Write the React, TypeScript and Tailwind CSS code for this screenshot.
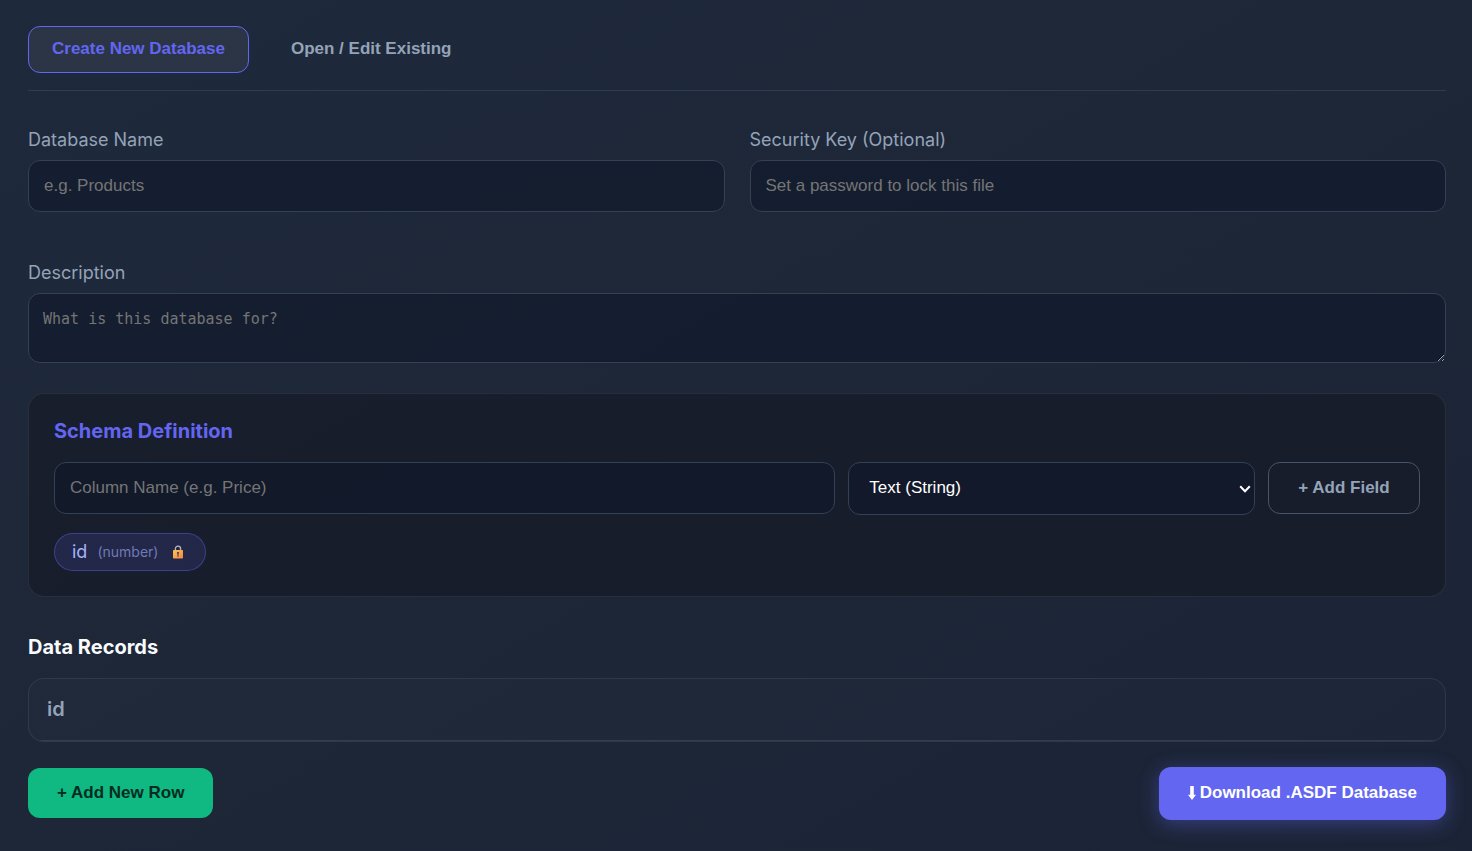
import { useState } from "react";

const fieldClass =
  "h-[52px] w-full min-w-0 rounded-xl border border-[#334155] bg-[#0f172a]/60 px-[15px] text-[17px] text-white outline-none placeholder:text-[#757575] font-['Liberation_Sans',Arial,sans-serif]";
const labelClass = "mb-2 block leading-6 text-[#94a3b8]";
const buttonFont = "font-['Liberation_Sans',Arial,sans-serif] text-[17px] leading-5 font-bold";

function LockIcon() {
  return (
    <svg className="h-[14px] w-3" viewBox="0 0 12 14" aria-hidden="true">
      <defs>
        <linearGradient id="lock-body" x1="0" y1="0" x2="1" y2="1">
          <stop offset="0" stopColor="#fcc552" />
          <stop offset="1" stopColor="#f68344" />
        </linearGradient>
      </defs>
      <path d="M3.4 6V3.700A2.600 2.600 0 0 1 8.600 3.700V6" fill="none" stroke="#b9b2c4" strokeWidth="1.300" />
      <rect x="1" y="5" width="10" height="8.500" rx="0.8" fill="url(#lock-body)" />
      <path d="M5 7h2v1.600l-.4.500v2.700H5.400V9.100L5 8.600z" fill="#5a4657" />
    </svg>
  );
}

function DownArrow() {
  return (
    <svg className="h-[14px] w-2 shrink-0" viewBox="0 0 8 14" aria-hidden="true">
      <path d="M2.200 0h3.600v8.800H8L4 14 0 8.800h2.200z" fill="currentColor" />
    </svg>
  );
}

function Chevron() {
  return (
    <svg
      className="pointer-events-none absolute top-1/2 right-1 h-2 w-3 -translate-y-1/2"
      viewBox="0 0 12 8"
      aria-hidden="true"
    >
      <path d="M1.200 1.300L6 6.200L10.800 1.300" fill="none" stroke="#fff" strokeWidth="2" />
    </svg>
  );
}

export default function App() {
  const [tab, setTab] = useState("create");
  const tabClass = (name: string) =>
    `h-[47px] rounded-xl border px-[23px] pb-[2px] ${buttonFont} ${
      tab === name
        ? "border-[#6366f1] bg-white/6 text-[#6366f1]"
        : "border-transparent text-[#94a3b8]"
    }`;

  return (
    <main className="min-h-screen bg-linear-to-br from-[#1e293b] via-[#1d2738] to-[#1b2436] pt-[26px] pr-[26px] pb-[31px] pl-7 font-['Inter',sans-serif] text-lg text-[#f8fafc]">
      <nav className="flex gap-[18px] border-b border-[#334155]/80 pb-[17px]">
        <button type="button" className={tabClass("create")} onClick={() => setTab("create")}>
          Create New Database
        </button>
        <button type="button" className={tabClass("open")} onClick={() => setTab("open")}>
          Open / Edit Existing
        </button>
      </nav>

      <form onSubmit={(event) => event.preventDefault()}>
        <div className="mt-[37px] grid grid-cols-2 gap-[25px]">
          <div>
            <label htmlFor="db-name" className={labelClass}>
              Database Name
            </label>
            <input id="db-name" className={fieldClass} placeholder="e.g. Products" />
          </div>
          <div>
            <label htmlFor="db-key" className={labelClass}>
              Security Key (Optional)
            </label>
            <input
              id="db-key"
              type="password"
              className={fieldClass}
              placeholder="Set a password to lock this file"
            />
          </div>
        </div>

        <div className="mt-[49px]">
          <label htmlFor="db-description" className={labelClass}>
            Description
          </label>
          <textarea
            id="db-description"
            rows={2}
            placeholder="What is this database for?"
            className="block h-[70px] w-full resize rounded-xl border border-[#334155] bg-[#0f172a]/60 px-[14px] py-[15px] font-['Consolas','DejaVu_Sans_Mono',monospace] text-[15px] leading-5 text-white outline-none placeholder:text-[#757575]"
          />
        </div>

        <section className="mt-[30px] rounded-2xl border border-white/8 bg-[#151a26]/70 px-[25px] pt-[22px] pb-[25px]">
          <h2 className="text-xl leading-[30px] font-bold text-[#6366f1]">Schema Definition</h2>
          <div className="mt-4 grid grid-cols-[782fr_407fr_152px] gap-[13px]">
            <input
              aria-label="Column name"
              className={fieldClass}
              placeholder="Column Name (e.g. Price)"
            />
            <div className="relative">
              <select
                aria-label="Column type"
                className="block h-[53px] w-full min-w-0 appearance-none rounded-xl border border-[#334155] bg-[#0f172a]/60 pr-6 pl-5 font-['Liberation_Sans',Arial,sans-serif] text-[17px] text-white outline-none"
              >
                <option>Text (String)</option>
                <option>Number</option>
                <option>Boolean</option>
              </select>
              <Chevron />
            </div>
            <button
              type="button"
              className={`h-[52px] rounded-xl border border-[#475569] text-[#94a3b8] ${buttonFont}`}
            >
              + Add Field
            </button>
          </div>
          <div className="mt-[18px] flex">
            <span className="flex h-[38px] items-center rounded-full border border-[#6366f1]/40 bg-[#6366f1]/15 px-[17px] text-[#a5b4fc]">
              id
              <span className="ml-[10px] text-sm text-[#a5b4fc]/60">(number)</span>
              <span className="mr-1 ml-[14px]">
                <LockIcon />
              </span>
            </span>
          </div>
        </section>

        <h2 className="mt-[35px] text-xl leading-[30px] font-bold">Data Records</h2>
        <div className="mt-4 overflow-hidden rounded-2xl border border-white/8 bg-white/1">
          <table className="w-full text-left">
            <thead>
              <tr className="h-[61px] border-b border-white/10">
                <th scope="col" className="px-[18px] text-xl font-semibold text-[#94a3b8]">
                  id
                </th>
              </tr>
            </thead>
          </table>
        </div>

        <div className="mt-[25px] flex items-center justify-between">
          <button
            type="button"
            className={`h-[50px] rounded-xl bg-[#10b981] px-[29px] text-[#022c22] ${buttonFont}`}
          >
            + Add New Row
          </button>
          <button
            type="submit"
            className={`flex h-[53px] items-center gap-1 rounded-xl bg-[#6366f1] px-[29px] text-white shadow-[0_4px_20px_rgba(99,102,241,0.4)] ${buttonFont}`}
          >
            <DownArrow />
            Download .ASDF Database
          </button>
        </div>
      </form>
    </main>
  );
}
